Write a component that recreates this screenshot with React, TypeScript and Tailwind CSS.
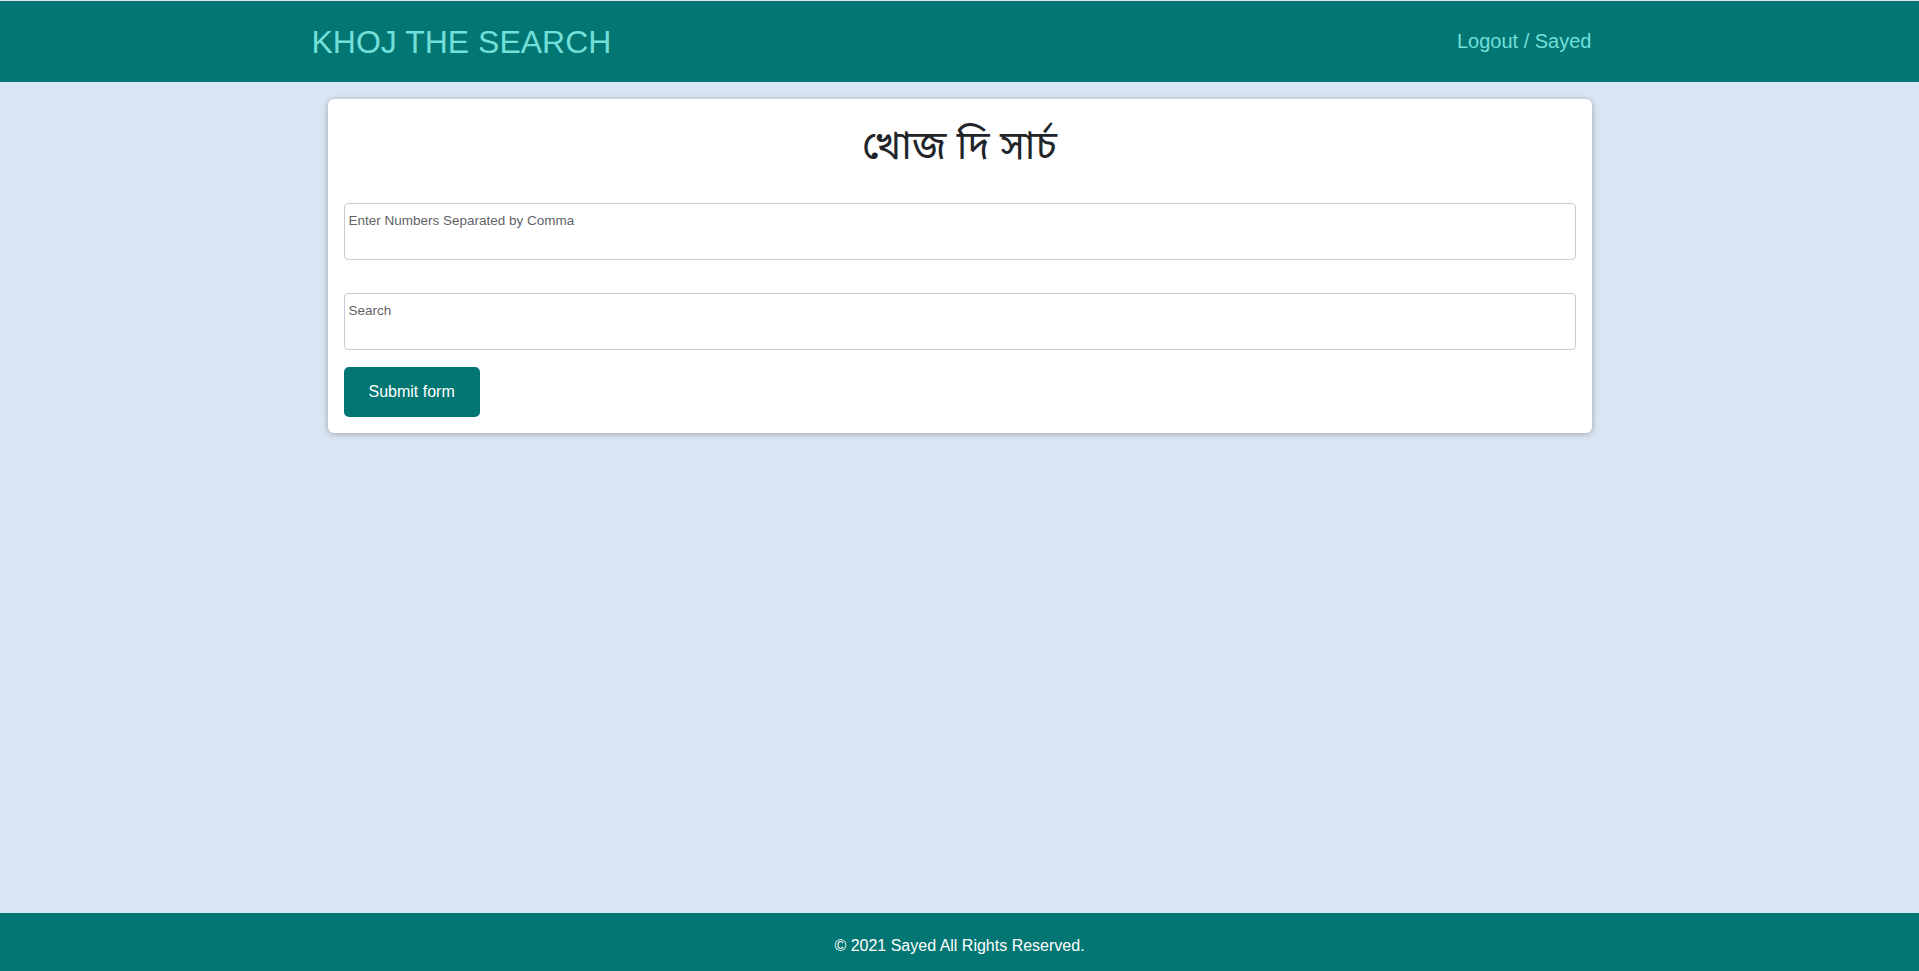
import { useState } from 'react';

// Simple search page: header, form card, footer.

function Header() {
  return (
    <header className="border-t border-[#dfe5ea] bg-[#027673]">
      <div className="mx-auto flex h-[81px] w-[1320px] items-center justify-between px-3">
        <a href="#" className="text-[32px] leading-none text-[#72dfd9]">
          KHOJ THE SEARCH
        </a>
        <a href="#" className="px-4 pb-[2px] text-[20px] leading-none text-[#72dfd9]">
          Logout / Sayed
        </a>
      </div>
    </header>
  );
}

function SearchCard() {
  const [numbers, setNumbers] = useState('');
  const [search, setSearch] = useState('');

  return (
    <div className="mx-auto w-[1320px] px-3 pt-[17px]">
      <div className="mx-4 rounded-[6px] bg-white p-4 shadow-[0_1px_6px_rgba(0,0,0,0.28)]">
        <h1 className="mt-[10px] text-center text-[40px] leading-[48px] text-[#212529] [font-family:'Noto_Sans_Bengali','Lohit_Bengali','FreeSans','Noto_Sans',sans-serif]">
          খোজ দি সার্চ
        </h1>
        <form className="mt-[30px] flex flex-col" onSubmit={(e) => e.preventDefault()}>
          <textarea
            value={numbers}
            onChange={(e) => setNumbers(e.target.value)}
            placeholder="Enter Numbers Separated by Comma"
            className="h-[57px] w-full resize-none rounded-[4px] border border-[#c6ccd3] px-[4px] pt-[9px] pb-[4px] text-[13.5px] leading-[15px] text-[#212529] outline-none placeholder:text-[#5f6368]"
          />
          <textarea
            value={search}
            onChange={(e) => setSearch(e.target.value)}
            placeholder="Search"
            className="mt-[33px] h-[57px] w-full resize-none rounded-[4px] border border-[#c6ccd3] px-[4px] pt-[9px] pb-[4px] text-[13.5px] leading-[15px] text-[#212529] outline-none placeholder:text-[#5f6368]"
          />
          <div className="mt-[17px]">
            <button
              type="submit"
              className="h-[50px] rounded-[5px] bg-[#027673] px-[25px] text-[16px] text-white"
            >
              Submit form
            </button>
          </div>
        </form>
      </div>
    </div>
  );
}

export default function App() {
  return (
    <div className="flex min-h-screen flex-col bg-[#dae5f3] [font-family:'Liberation_Sans',Arial,sans-serif]">
      <Header />
      <main className="flex-1">
        <SearchCard />
      </main>
      <footer className="flex h-[58px] items-center justify-center bg-[#027673] pt-[7px] text-[16px] text-white">
        © 2021 Sayed All Rights Reserved.
      </footer>
    </div>
  );
}
